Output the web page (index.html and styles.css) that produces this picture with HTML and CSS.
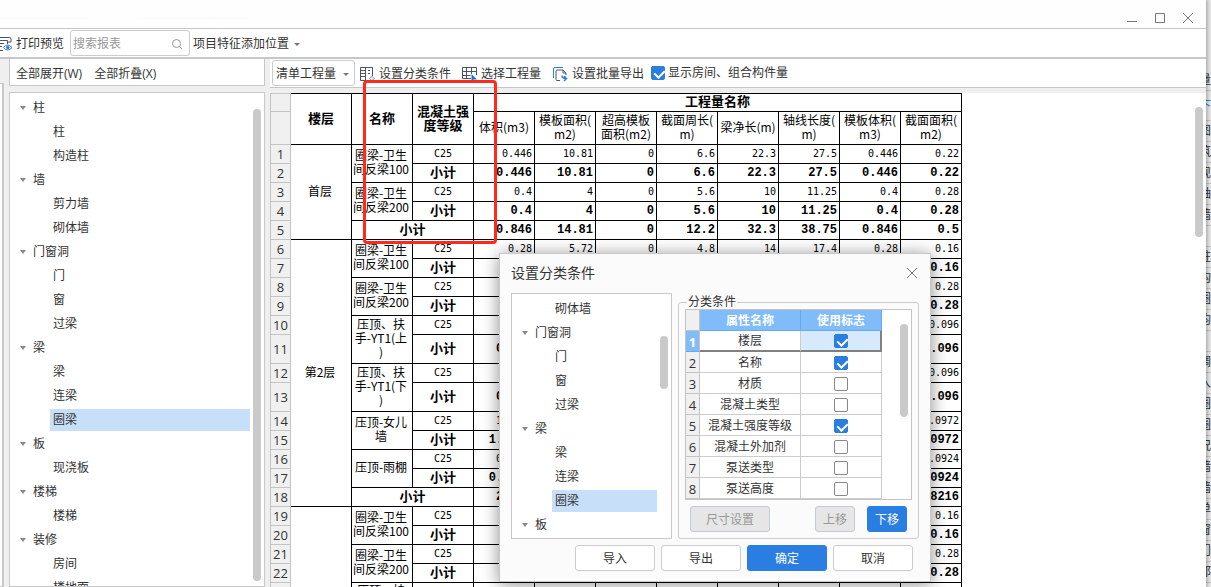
FILE: index.html
```
<!DOCTYPE html>
<html lang="zh-CN">
<head>
<meta charset="utf-8">
<title>报表预览</title>
<link rel="stylesheet" href="styles.css">
</head>
<body>
<div class="screen">
<div class="window">
  <header class="titlebar">
    <button class="winbtn" aria-label="最小化"><svg width="12" height="12" viewBox="0 0 12 12"><path d="M1 9.5h10"/></svg></button>
    <button class="winbtn" aria-label="最大化"><svg width="12" height="12" viewBox="0 0 12 12"><path d="M1.5 1.5h9v9h-9z"/></svg></button>
    <button class="winbtn" aria-label="关闭"><svg width="12" height="12" viewBox="0 0 12 12"><path d="M1 1l10 10M11 1L1 11"/></svg></button>
  </header>

  <div class="toolbar">
    <button class="tool preview">
      <svg width="13" height="16" viewBox="0 0 13 16" fill="none" stroke="#4a5568"><path d="M0 1.5h9.500q1.500 0 1.500 1.500v3H7.500V4.500H0M7.500 6v2M0 7.500h4M0 10.500h2M0 14.500h3"/><path d="M3.500 11.500q4-5 8.500 0q-4.500 5-8.500 0z" stroke="#2a7de1" fill="#fff"/><circle cx="7.800" cy="11.500" r="1.300" stroke="#2a7de1" fill="#2a7de1"/></svg>
      打印预览</button>
    <label class="search"><input type="text" placeholder="搜索报表" aria-label="搜索报表"><svg width="12" height="12" viewBox="0 0 12 12" fill="none" stroke="#999"><circle cx="5.500" cy="5.500" r="4"/><path d="M8.500 8.500l2.500 2.500"/></svg></label>
    <button class="tool feature">项目特征添加位置<i class="caret"></i></button>
  </div>

  <div class="body">
    <div class="edge"></div>
    <aside class="sidebar">
      <div class="expandbar"><button class="tool">全部展开(W)</button><button class="tool">全部折叠(X)</button></div>
      <div class="tree">
        <ul>
          <li class="group">柱</li><li>柱</li><li>构造柱</li>
          <li class="group">墙</li><li>剪力墙</li><li>砌体墙</li>
          <li class="group">门窗洞</li><li>门</li><li>窗</li><li>过梁</li>
          <li class="group">梁</li><li>梁</li><li>连梁</li><li class="picked"><span>圈梁</span></li>
          <li class="group">板</li><li>现浇板</li>
          <li class="group">楼梯</li><li>楼梯</li>
          <li class="group">装修</li><li>房间</li><li>楼地面</li>
        </ul>
        <div class="scroll side-scroll"></div>
      </div>
    </aside>

    <main class="main">
      <div class="reportbar">
        <button class="combo">清单工程量<i class="caret"></i></button>
        <button class="tool set"><svg width="16" height="16" viewBox="0 0 16 16" fill="none" stroke="#4a5568"><path d="M9 14.500H1.500v-13h12V10M6.500 1.500v13M1.500 4.500h5M1.500 7.500h5M1.500 10.500h5M9 4.500h2M9 7.500h2"/><path d="M13 10.500l2.500 2-2.500 2-2.500-2z" stroke="#6a9fe8"/></svg>设置分类条件</button>
        <button class="tool pick"><svg width="16" height="16" viewBox="0 0 16 16" fill="none" stroke="#4a5568"><path d="M10 12.500H1.500v-11h14V9M5.500 1.500v11M10.500 1.500V8M1.500 5.500h14M1.500 9.500h8"/><path d="M10.500 8v7.500l2-2H16z" fill="#1f70e0" stroke="none"/></svg>选择工程量</button>
        <button class="tool export"><svg width="16" height="16" viewBox="0 0 16 16" fill="none"><path d="M1.500 12V3q0-1.500 1.500-1.500h8" stroke="#2a7de1"/><path d="M8 14.500H5q-1 0-1-1V5q0-1 1-1h6l3 3v2M11 4v3h3" stroke="#4a5568"/><path d="M10 9.500q0 3 4 3M12 10l2.500 2.500L12 15" stroke="#2a7de1" stroke-width="1.500"/></svg>设置批量导出</button>
        <label class="show"><input type="checkbox" class="check" checked>显示房间、组合构件量</label>
      </div>

      <div class="sheet">
        <table class="report">
          <colgroup><col class="c-num"><col span="11" class="c-data"></colgroup>
          <tr class="h1"><th class="num"></th><th rowspan="2">楼层</th><th rowspan="2">名称</th><th rowspan="2">混凝土强<br>度等级</th><th colspan="8">工程量名称</th></tr>
          <tr class="h2"><th class="num"></th><td>体积(m3)</td><td>模板面积(<br>m2)</td><td>超高模板<br>面积(m2)</td><td>截面周长(<br>m)</td><td>梁净长(m)</td><td>轴线长度(<br>m)</td><td>模板体积(<br>m3)</td><td>截面面积(<br>m2)</td></tr>
          <tr class="v"><th class="num">1</th><td rowspan="5" class="name">首层</td><td rowspan="2" class="name">圈梁-卫生<br>间反梁100</td><td class="grade">C25</td><td>0.446</td><td>10.81</td><td>0</td><td>6.6</td><td>22.3</td><td>27.5</td><td>0.446</td><td>0.22</td></tr>
          <tr class="v sum"><th class="num">2</th><td class="sub">小计</td><td>0.446</td><td>10.81</td><td>0</td><td>6.6</td><td>22.3</td><td>27.5</td><td>0.446</td><td>0.22</td></tr>
          <tr class="v"><th class="num">3</th><td rowspan="2" class="name">圈梁-卫生<br>间反梁200</td><td class="grade">C25</td><td>0.4</td><td>4</td><td>0</td><td>5.6</td><td>10</td><td>11.25</td><td>0.4</td><td>0.28</td></tr>
          <tr class="v sum"><th class="num">4</th><td class="sub">小计</td><td>0.4</td><td>4</td><td>0</td><td>5.6</td><td>10</td><td>11.25</td><td>0.4</td><td>0.28</td></tr>
          <tr class="v sum"><th class="num">5</th><td colspan="2" class="sub">小计</td><td>0.846</td><td>14.81</td><td>0</td><td>12.2</td><td>32.3</td><td>38.75</td><td>0.846</td><td>0.5</td></tr>
          <tr class="v"><th class="num">6</th><td rowspan="13" class="name">第2层</td><td rowspan="2" class="name">圈梁-卫生<br>间反梁100</td><td class="grade">C25</td><td>0.28</td><td>5.72</td><td>0</td><td>4.8</td><td>14</td><td>17.4</td><td>0.28</td><td>0.16</td></tr>
          <tr class="v sum"><th class="num">7</th><td class="sub">小计</td><td></td><td></td><td></td><td></td><td></td><td></td><td></td><td>0.16</td></tr>
          <tr class="v"><th class="num">8</th><td rowspan="2" class="name">圈梁-卫生<br>间反梁200</td><td class="grade">C25</td><td></td><td></td><td></td><td></td><td></td><td></td><td></td><td>0.28</td></tr>
          <tr class="v sum"><th class="num">9</th><td class="sub">小计</td><td></td><td></td><td></td><td></td><td></td><td></td><td></td><td>0.28</td></tr>
          <tr class="v"><th class="num">10</th><td rowspan="2" class="name">压顶、扶<br>手-YT1(上<br>)</td><td class="grade">C25</td><td></td><td></td><td></td><td></td><td></td><td></td><td></td><td>0.096</td></tr>
          <tr class="v tall sum"><th class="num">11</th><td class="sub">小计</td><td>0.096</td><td></td><td></td><td></td><td></td><td></td><td></td><td>0.096</td></tr>
          <tr class="v"><th class="num">12</th><td rowspan="2" class="name">压顶、扶<br>手-YT1(下<br>)</td><td class="grade">C25</td><td></td><td></td><td></td><td></td><td></td><td></td><td></td><td>0.096</td></tr>
          <tr class="v tall sum"><th class="num">13</th><td class="sub">小计</td><td>0.096</td><td></td><td></td><td></td><td></td><td></td><td></td><td>0.096</td></tr>
          <tr class="v"><th class="num">14</th><td rowspan="2" class="name">压顶-女儿<br>墙</td><td class="grade">C25</td><td>1.0972</td><td></td><td></td><td></td><td></td><td></td><td></td><td>0.0972</td></tr>
          <tr class="v sum"><th class="num">15</th><td class="sub">小计</td><td>1.0972</td><td></td><td></td><td></td><td></td><td></td><td></td><td>0.0972</td></tr>
          <tr class="v"><th class="num">16</th><td rowspan="2" class="name">压顶-雨棚</td><td class="grade">C25</td><td>0.0924</td><td></td><td></td><td></td><td></td><td></td><td></td><td>0.0924</td></tr>
          <tr class="v sum"><th class="num">17</th><td class="sub">小计</td><td>0.0924</td><td></td><td></td><td></td><td></td><td></td><td></td><td>0.0924</td></tr>
          <tr class="v sum"><th class="num">18</th><td colspan="2" class="sub">小计</td><td>2.821</td><td></td><td></td><td></td><td></td><td></td><td></td><td>0.8216</td></tr>
          <tr class="v"><th class="num">19</th><td rowspan="5"></td><td rowspan="2" class="name">圈梁-卫生<br>间反梁100</td><td class="grade">C25</td><td></td><td></td><td></td><td></td><td></td><td></td><td></td><td>0.16</td></tr>
          <tr class="v sum"><th class="num">20</th><td class="sub">小计</td><td></td><td></td><td></td><td></td><td></td><td></td><td></td><td>0.16</td></tr>
          <tr class="v"><th class="num">21</th><td rowspan="2" class="name">圈梁-卫生<br>间反梁200</td><td class="grade">C25</td><td></td><td></td><td></td><td></td><td></td><td></td><td></td><td>0.28</td></tr>
          <tr class="v sum"><th class="num">22</th><td class="sub">小计</td><td></td><td></td><td></td><td></td><td></td><td></td><td></td><td>0.28</td></tr>
          <tr class="v tall"><th class="num"></th><td class="name">压顶、扶<br>手-YT1</td><td></td><td></td><td></td><td></td><td></td><td></td><td></td><td></td><td></td></tr>
        </table>
        <div class="scroll sheet-scroll"></div>
      </div>
      <div class="marker"></div>

      <section class="dialog" role="dialog" aria-labelledby="dlg-title">
        <div class="dlg-head"><h2 id="dlg-title">设置分类条件</h2><button class="winbtn" aria-label="关闭对话框"><svg width="12" height="12" viewBox="0 0 12 12"><path d="M1 1l10 10M11 1L1 11"/></svg></button></div>
        <div class="dlg-body">
          <div class="tree dlg-tree">
            <ul>
              <li>砌体墙</li><li class="group">门窗洞</li><li>门</li><li>窗</li><li>过梁</li>
              <li class="group">梁</li><li>梁</li><li>连梁</li><li class="picked"><span>圈梁</span></li><li class="group">板</li>
            </ul>
            <div class="scroll dlg-tree-scroll"></div>
          </div>
          <fieldset class="box">
            <legend>分类条件</legend>
            <div class="gridwrap">
              <table class="grid">
                <colgroup><col class="g-num"><col class="g-name"><col class="g-use"></colgroup>
                <tr><th class="gn"></th><th>属性名称</th><th>使用标志</th></tr>
                <tr class="current"><td class="gn">1</td><td>楼层</td><td><input type="checkbox" class="check" aria-label="楼层" checked></td></tr>
                <tr><td class="gn">2</td><td>名称</td><td><input type="checkbox" class="check" aria-label="名称" checked></td></tr>
                <tr><td class="gn">3</td><td>材质</td><td><input type="checkbox" class="check" aria-label="材质"></td></tr>
                <tr><td class="gn">4</td><td>混凝土类型</td><td><input type="checkbox" class="check" aria-label="混凝土类型"></td></tr>
                <tr><td class="gn">5</td><td>混凝土强度等级</td><td><input type="checkbox" class="check" aria-label="混凝土强度等级" checked></td></tr>
                <tr><td class="gn">6</td><td>混凝土外加剂</td><td><input type="checkbox" class="check" aria-label="混凝土外加剂"></td></tr>
                <tr><td class="gn">7</td><td>泵送类型</td><td><input type="checkbox" class="check" aria-label="泵送类型"></td></tr>
                <tr><td class="gn">8</td><td>泵送高度</td><td><input type="checkbox" class="check" aria-label="泵送高度"></td></tr>
              </table>
              <div class="scroll grid-scroll"></div>
            </div>
            <div class="boxbtns"><button class="btn" disabled>尺寸设置</button><span class="grow"></span><button class="btn short" disabled>上移</button><button class="btn short primary">下移</button></div>
          </fieldset>
        </div>
        <div class="dlg-foot"><button class="btn">导入</button><button class="btn">导出</button><button class="btn primary">确定</button><button class="btn">取消</button></div>
      </section>
    </main>
  </div>
</div>
<div class="behind" aria-hidden="true"><b>量</b><b class="link">下</b><b>图</b><b>筑</b><b>现</b><b>轴</b><b>墙</b><b></b><b>柱</b><b>构</b><b>圈</b><b>均</b><b></b><b>调</b><b>入</b><b>圈</b><b>圈</b><b>况</b><b>墙</b><b>墙</b><b>单</b><b>窗</b><b>门</b><b>郭</b></div>
</div>
</body>
</html>
```
FILE: styles.css
```
* { box-sizing: border-box; }
body {
  margin: 0;
  font: 12px/18px "Open Sans", "Noto Sans CJK SC", sans-serif;
  color: #333;
  background: #fff;
}
button { font: inherit; color: inherit; background: none; border: 0; padding: 0; white-space: nowrap; }
ul { list-style: none; margin: 0; padding: 0; }
.screen { display: flex; height: 100vh; overflow: hidden; }
.window { flex: 1; min-width: 0; display: flex; flex-direction: column; background: #efefef; position: relative; z-index: 1; box-shadow: 0 0 5px 1px rgba(0,0,0,.4); }

.titlebar {
  height: 29px; flex: none; display: flex; justify-content: flex-end; align-items: center; gap: 16px;
  padding: 8px 12px 0 0; border-bottom: 1px solid #c5c7cb;
  background:
    radial-gradient(ellipse at 2% 65%, #f8f8f8, transparent 5%),
    radial-gradient(ellipse at 16% 65%, #f8f8f8, transparent 5%), #fefefe;
}
.winbtn { width: 12px; height: 12px; display: flex; }
.winbtn svg { fill: none; stroke: #777; }

.toolbar { flex: none; height: 30px; display: flex; align-items: center; background: #fff; border-bottom: 2px solid #c5c7cb; }
.tool { display: flex; align-items: center; padding-top: 2px; }
.preview { gap: 3px; width: 70px; }
.search { display: flex; align-items: center; width: 120px; height: 26px; border: 1px solid #ccc; border-radius: 3px; padding: 2px 6px 0 2px; background: #fff; }
.search input { flex: 1; min-width: 0; border: 0; padding: 0; font: inherit; outline: 0; background: none; }
.search input::placeholder { color: #999; opacity: 1; }
.feature { margin-left: 3px; gap: 5px; }
.caret { width: 0; border: 3px solid transparent; border-top-color: #777; border-bottom: 0; }

.body { flex: 1; min-height: 0; display: flex; gap: 5px; }
.edge { width: 4px; margin-top: 24px; border: 1px solid #c8c8c8; border-right-width: 2px; border-left: 0; background: #fff; }
.sidebar { width: 256px; flex: none; display: flex; flex-direction: column; gap: 6px; }
.expandbar { height: 27px; flex: none; display: flex; gap: 12px; padding: 2px 0 0 6px; background: #fff; border: 1px solid #c5c7cb; border-top: 0; }
.tree { position: relative; flex: 1; min-height: 0; overflow: hidden; background: #fff; border: 1px solid #c8c8c8; padding: 3px 14px 0 10px; }
.tree li { height: 24px; padding-left: 33px; line-height: 24px; display: flex; align-items: center; }
.tree li.group { padding-left: 0; }
.tree .group::before { content: ""; margin: 0 7px 0 0; border: 4px solid transparent; border-top: 4px solid #888; border-bottom: 0; border-left-width: 3px; border-right-width: 3px; }
.tree .picked { padding-left: 30px; }
.picked span { flex: 1; height: 22px; line-height: 22px; padding-left: 3px; background: #c8dff9; }
.scroll { position: absolute; width: 8px; border-radius: 4px; background: #c9c9c9; }
.side-scroll { right: 3px; top: 16px; bottom: 5px; }

.main { flex: 1; min-width: 0; position: relative; display: flex; flex-direction: column; gap: 5px; }
.reportbar { height: 29px; flex: none; display: flex; align-items: center; padding-left: 2px; background: #fff; border-bottom: 1px solid #c5c7cb; }
.reportbar .tool { gap: 4px; margin-right: 11px; }
.combo { width: 83px; height: 26px; display: flex; align-items: center; justify-content: space-between; padding: 2px 5px 0 3px; border: 1px solid #ccc; border-radius: 3px; }
.reportbar .set { margin-left: 4px; margin-right: 10px; }
.reportbar .export { margin-right: 7px; }
.show { display: flex; align-items: center; gap: 3px; white-space: nowrap; }
.check { appearance: none; width: 14px; height: 14px; margin: 0; border: 1px solid #888; border-radius: 2px; background: #fff; position: relative; display: block; flex: none; }
.check:checked { background: #2a7de1; border-color: #2a7de1; }
.check:checked::after { content: ""; position: absolute; left: 4px; top: 1px; width: 5px; height: 8px; border: solid #fff; border-width: 0 2px 2px 0; transform: rotate(45deg); }

.sheet { position: relative; flex: 1; min-height: 0; overflow: hidden; background: #fff; }
.report { table-layout: fixed; width: 692px; border-collapse: separate; border-spacing: 0; color: #000; font: 12px/14px "Noto Sans CJK SC", sans-serif; }
.c-num { width: 21px; }
.c-data { width: 61px; }
.report th, .report td { padding: 0 0 3px; text-align: center; border: solid #000; border-width: 0 1px 1px 0; white-space: nowrap; overflow: hidden; }
.report .h1 th { border-top-width: 1px; }
.report th { font-size: 13px; font-weight: 700; }
.report .num { padding: 0; background: #f0f0f0; border-color: #c4c4c4; border-left-width: 1px; color: #333; font: 13px/16px "Open Sans", sans-serif; }
.h1 { height: 19px; }
.h2 { height: 33px; }
.v { height: 19px; }
.tall { height: 29px; }
.report .v td { text-align: right; padding: 0 2px 0 0; font: 10px/14px "DejaVu Sans Mono", monospace; }
.report .sum td { font: 700 12px/14px "Liberation Mono", monospace; }
.report .v .name { text-align: center; padding: 0 2px 3px 0; font: 12px/14px "Noto Sans CJK SC", sans-serif; }
.report .v .grade { text-align: center; padding: 0; }
.report .v .sub { text-align: center; padding: 0 0 2px; font: 700 13px/14px "Noto Sans CJK SC", sans-serif; }
.sheet-scroll { right: 3px; top: 14px; height: 130px; }
.marker { position: absolute; left: 93px; top: 21px; width: 134px; height: 164px; border: 3px solid #ff2a1c; border-radius: 4px; }

.dialog { position: absolute; left: 229px; top: 194px; width: 432px; padding: 9px 11px 10px 11px; border: 1px solid #c8c8c8; background: #fbfbfb; box-shadow: 0 2px 16px rgba(0,0,0,.45); }
.dlg-head { display: flex; justify-content: space-between; align-items: center; height: 20px; padding-right: 1px; }
.dlg-head h2 { margin: 0; font-size: 14px; font-weight: 400; line-height: 20px; }
.dlg-body { display: flex; gap: 6px; margin-top: 10px; height: 246px; }
.dlg-tree { flex: none; width: 161px; }
.dlg-tree-scroll { right: 3px; top: 42px; height: 53px; }
.box { flex: 1; min-width: 0; margin: 0; padding: 0 6px; border: 1px solid #ccc; border-radius: 3px; display: flex; flex-direction: column; }
.box legend { margin-left: 2px; padding: 0 1px; line-height: 18px; }
.gridwrap { position: relative; flex: none; height: 191px; overflow: hidden; border: 1px solid #c4c4c4; background: #fff; margin-top: -2px; }
.grid { table-layout: fixed; width: 196px; border-collapse: separate; border-spacing: 0; }
.g-num { width: 14px; } .g-name { width: 101px; } .g-use { width: 81px; }
.grid tr { height: 21px; }
.grid th, .grid td { padding: 1px 0 0; text-align: center; border: solid #ccc; border-width: 0 1px 1px 0; line-height: 18px; }
.grid th { background: #80bbfa; border-color: #66a9ef; color: #fff; }
.grid .gn { background: #f0f0f0; border-color: #c4c4c4; font-size: 13px; }
.grid .check { margin: 0 auto; }
.grid .current td { border-bottom: 2px solid #808080; }
.grid .current td:last-child { background: #d6e9fd; border-right: 2px solid #808080; }
.grid .current .gn { background: #80bbfa; border-bottom: 1px solid #66a9ef; color: #fff; font-weight: 700; }
.grid-scroll { right: 3px; top: 14px; height: 93px; }
.boxbtns { display: flex; gap: 12px; padding: 6px 5px 0 5px; }
.grow { flex: 1; }
.btn { width: 80px; height: 26px; padding-top: 1px; border: 1px solid #ccc; border-radius: 3px; background: #fff; }
.btn:disabled { background: #e6e6e6; border-color: #c4cad6; color: #999; }
.short { width: 40px; }
.btn.primary { background: #2a7de1; border-color: #2a7de1; color: #fff; }
.dlg-foot { display: flex; justify-content: flex-end; gap: 6px; margin-top: 6px; padding-right: 6px; }

.behind { width: 5px; flex: none; overflow: hidden; background: #ededed; padding-top: 70px; }
.behind b { display: flex; justify-content: flex-end; height: 21px; font-weight: 400; line-height: 20px; border-bottom: 1px solid #ccc; overflow: hidden; }
.behind .link { height: 30px; line-height: 30px; color: #2a7de1; }
```
